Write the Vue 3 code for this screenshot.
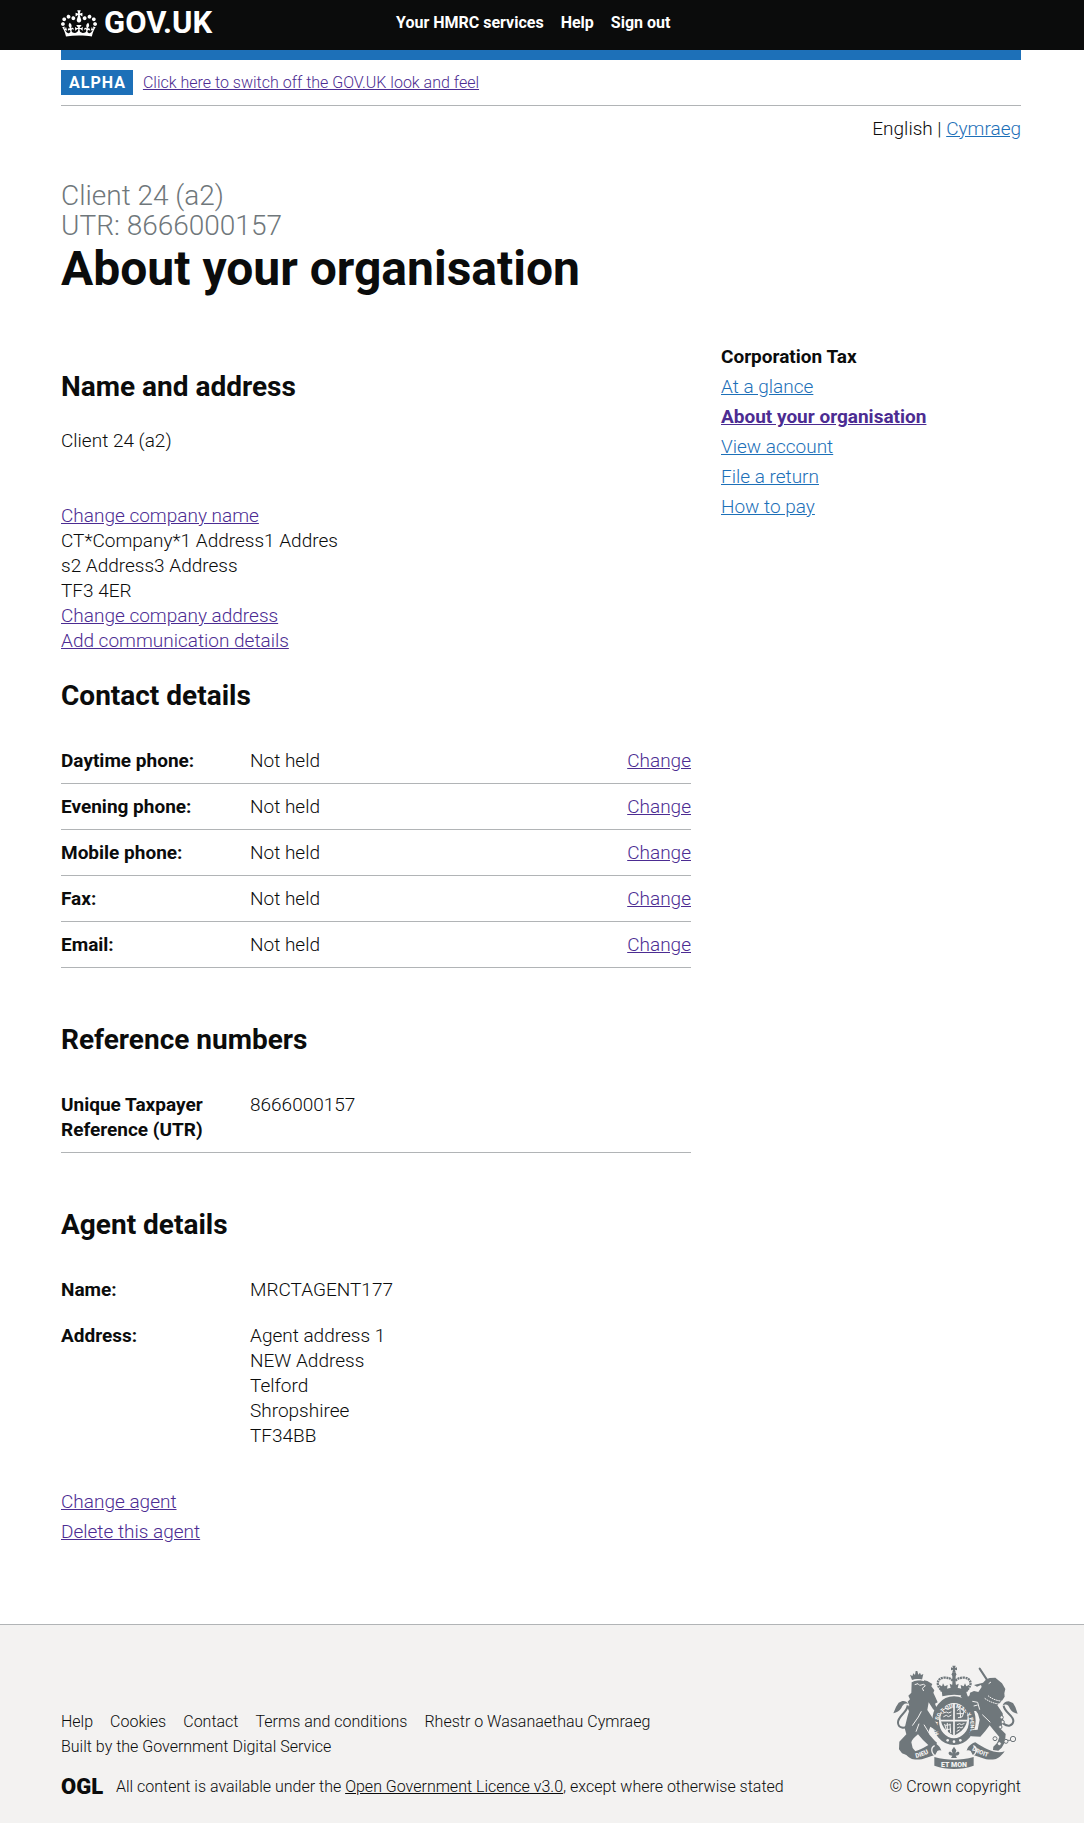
<script setup>
const headerLinks = ['Your HMRC services', 'Help', 'Sign out']

const sectionLinks = [
  { text: 'At a glance' },
  { text: 'About your organisation', current: true },
  { text: 'View account' },
  { text: 'File a return' },
  { text: 'How to pay' },
]

const contactRows = ['Daytime phone:', 'Evening phone:', 'Mobile phone:', 'Fax:', 'Email:']

const agentAddress = ['Agent address 1', 'NEW Address', 'Telford', 'Shropshiree', 'TF34BB']

const footerLinks = ['Help', 'Cookies', 'Contact', 'Terms and conditions', 'Rhestr o Wasanaethau Cymraeg']
</script>

<template>
  <div class="page">
    <header class="gutter header">
      <div class="container header-inner">
        <a href="#" class="logo">
          <svg class="crown" viewBox="0 0 132 97" aria-hidden="true">
            <path fill="currentColor" fill-rule="evenodd" d="M25 30.2c3.5 1.5 7.7-.2 9.1-3.7 1.5-3.6-.2-7.8-3.9-9.2-3.6-1.4-7.6.3-9.1 3.9-1.4 3.5.3 7.5 3.9 9zM9 39.5c3.6 1.5 7.8-.2 9.2-3.7 1.5-3.6-.2-7.8-3.9-9.1-3.6-1.5-7.6.2-9.1 3.8-1.4 3.5.3 7.5 3.8 9zM4.4 57.2c3.5 1.5 7.7-.2 9.1-3.8 1.5-3.6-.2-7.7-3.9-9.1-3.5-1.5-7.6.3-9.1 3.8-1.4 3.5.3 7.6 3.9 9.1zm38.3-21.4c3.5 1.5 7.7-.2 9.1-3.8 1.5-3.6-.2-7.7-3.9-9.1-3.6-1.5-7.6.3-9.1 3.8-1.3 3.6.4 7.7 3.9 9.1zm64.4-5.6c-3.6 1.5-7.8-.2-9.1-3.7-1.5-3.6.2-7.8 3.8-9.2 3.6-1.4 7.7.3 9.2 3.9 1.3 3.5-.4 7.5-3.9 9zm15.9 9.3c-3.6 1.5-7.7-.2-9.1-3.7-1.5-3.6.2-7.8 3.7-9.1 3.6-1.5 7.7.2 9.2 3.8 1.5 3.5-.3 7.5-3.8 9zm4.7 17.7c-3.6 1.5-7.8-.2-9.2-3.8-1.5-3.6.2-7.7 3.9-9.1 3.6-1.5 7.7.3 9.2 3.8 1.3 3.5-.4 7.6-3.9 9.1zM89.3 35.8c-3.6 1.5-7.8-.2-9.2-3.8-1.4-3.6.2-7.7 3.9-9.1 3.6-1.5 7.7.3 9.2 3.8 1.4 3.6-.3 7.7-3.9 9.1zM69.7 17.7l8.9 4.7V9.3l-8.9 2.8c-.2-.3-.5-.6-.9-.9L72.4 0H59.6l3.5 11.2c-.3.3-.6.5-.9.9l-8.8-2.8v13.1l8.8-4.7c.3.3.6.7.9.9l-5 15.4v.1c-.2.8-.4 1.6-.4 2.4 0 4.1 3.1 7.5 7 8.1h.2c.3 0 .7.1 1 .1.4 0 .7 0 1-.1h.2c4-.6 7.1-4.1 7.1-8.1 0-.8-.1-1.7-.4-2.4V34l-5.1-15.4c.4-.2.7-.6 1-.9zM66 92.8c16.9 0 32.8 1.1 47.1 3.2 4-16.9 8.9-26.7 14-33.5l-9.6-3.4c1 4.9 1.1 7.2 0 10.2-1.5-1.4-3-4.3-4.2-8.7L108.6 76c2.8-2 5-3.2 7.5-3.3-4.4 9.4-10 11.9-13.6 11.2-4.3-.8-6.3-4.6-5.6-7.9 1-4.7 5.7-5.9 8-.5 4.3-8.7-3-11.4-7.6-8.8 7.1-7.2 7.9-13.5 2.1-21.1-8 6.1-8.1 12.3-4.5 20.8-4.7-5.4-12.1-2.5-9.5 6.2 3.4-5.2 7.9-2 7.2 3.1-.6 4.3-6.4 7.8-13.5 7.2-10.3-.9-10.9-8-11.2-13.8 2.5-.5 7.1 1.8 11 7.3L80.2 60c-4.1 4.4-8 5.3-12.3 5.4 1.4-4.4 8-11.6 8-11.6H55.5s6.4 7.2 7.9 11.6c-4.2-.1-8-1-12.3-5.4l1.4 16.4c3.9-5.5 8.5-7.7 10.9-7.3-.3 5.8-.9 12.8-11.1 13.8-7.2.6-12.9-2.9-13.5-7.2-.7-5 3.8-8.3 7.1-3.1 2.7-8.7-4.6-11.6-9.4-6.2 3.7-8.5 3.6-14.7-4.6-20.8-5.8 7.6-5 13.9 2.2 21.1-4.7-2.6-11.9.1-7.7 8.8 2.3-5.5 7.1-4.2 8.1.5.7 3.3-1.3 7.1-5.7 7.9-3.5.7-9-1.8-13.5-11.2 2.5.1 4.7 1.3 7.5 3.3l-4.7-15.4c-1.2 4.4-2.7 7.2-4.3 8.7-1.1-3-.9-5.3 0-10.2l-9.5 3.4c5 6.9 9.9 16.7 14 33.5 14.8-2.1 30.8-3.2 47.7-3.2z" />
          </svg>
          <span>GOV.UK</span>
        </a>
        <nav class="header-nav" aria-label="Account">
          <a v-for="link in headerLinks" :key="link" href="#">{{ link }}</a>
        </nav>
      </div>
    </header>

    <div class="gutter">
      <div class="container">
        <div class="blue-bar"></div>
        <div class="phase-banner">
          <strong class="tag">ALPHA</strong>
          <a href="#" class="visited">Click here to switch off the GOV.UK look and feel</a>
        </div>
        <p class="languages">English | <a href="#">Cymraeg</a></p>

        <h1>
          <span class="caption">Client 24 (a2)<br>UTR: 8666000157</span>
          About your organisation
        </h1>

        <div class="columns">
          <main>
            <h2 class="first">Name and address</h2>
            <p class="client">Client 24 (a2)</p>
            <p class="details">
              <a href="#" class="visited">Change company name</a><br>
              CT*Company*1 Address1 Addres<br>
              s2 Address3 Address<br>
              TF3 4ER<br>
              <a href="#" class="visited">Change company address</a><br>
              <a href="#" class="visited">Add communication details</a>
            </p>

            <h2 class="contact">Contact details</h2>
            <table>
              <tbody>
                <tr v-for="label in contactRows" :key="label">
                  <th scope="row">{{ label }}</th>
                  <td>Not held</td>
                  <td class="action"><a href="#" class="visited">Change</a></td>
                </tr>
              </tbody>
            </table>

            <h2>Reference numbers</h2>
            <table>
              <tbody>
                <tr>
                  <th scope="row">Unique Taxpayer Reference (UTR)</th>
                  <td colspan="2">8666000157</td>
                </tr>
              </tbody>
            </table>

            <h2>Agent details</h2>
            <table class="plain">
              <tbody>
                <tr>
                  <th scope="row">Name:</th>
                  <td colspan="2">MRCTAGENT177</td>
                </tr>
                <tr>
                  <th scope="row">Address:</th>
                  <td colspan="2">
                    <div v-for="line in agentAddress" :key="line">{{ line }}</div>
                  </td>
                </tr>
              </tbody>
            </table>

            <ul class="link-list agent-links">
              <li><a href="#" class="visited">Change agent</a></li>
              <li><a href="#" class="visited">Delete this agent</a></li>
            </ul>
          </main>

          <aside>
            <h3>Corporation Tax</h3>
            <ul class="link-list">
              <li v-for="link in sectionLinks" :key="link.text">
                <a href="#" :class="{ visited: link.current, current: link.current }">{{ link.text }}</a>
              </li>
            </ul>
          </aside>
        </div>
      </div>
    </div>

    <footer class="gutter footer">
      <div class="container footer-inner">
        <div class="footer-meta">
          <ul class="footer-links">
            <li v-for="link in footerLinks" :key="link"><a href="#">{{ link }}</a></li>
          </ul>
          <div>Built by the Government Digital Service</div>
          <div class="licence">
            <span class="ogl">OGL</span>
            <span>All content is available under the <a href="#" class="underlined">Open Government Licence v3.0</a>, except where otherwise stated</span>
          </div>
        </div>
        <a href="#" class="copyright">
          <svg class="arms" viewBox="39 42 375 312" aria-hidden="true">
            <!-- garter and shield -->
            <ellipse cx="222" cy="209" rx="55" ry="63" fill="none" stroke="#6f777b" stroke-width="20" />
            <path d="M184 180c10-27 66-27 76 0 8 26-1 57-38 74-37-17-46-48-38-74z" fill="#6f777b" />
            <path d="M222 158v97M181 209h82" stroke="#f3f2f1" stroke-width="5" />
            <g stroke="#f3f2f1" stroke-width="3" fill="none" stroke-linecap="round">
              <path d="M190 176l8-4 6 3 8-4M190 186l9-3 6 3 8-3M191 197l8-4 6 4 8-4M232 221l7-3 5 3 8-3M232 231l6-3 5 3 5-3M231 241l7-4" />
              <path d="M232 178l10-7 10 10-5 16-12 3M240 176l2 24M231 188h19" />
              <path d="M194 220l6 20M202 217v29M210 219l2 26M197 223l14-2M199 236l13-2" />
            </g>
            <path id="garter-arc" d="M176 250A50 57 0 1 1 268 250" fill="none" />
            <text class="arms-text" font-size="16"><textPath href="#garter-arc" startOffset="50%" text-anchor="middle">HONI SOIT QUI MAL Y PENSE</textPath></text>
            <g fill="#f3f2f1">
              <circle cx="203" cy="268" r="4" />
              <circle cx="222" cy="272" r="4" />
              <circle cx="241" cy="268" r="4" />
            </g>

            <!-- crown -->
            <g fill="#6f777b">
              <path d="M217 44h10l-2 7 6-2v9l-6-2 2 8h-10l2-8-6 2v-9l6 2z" />
              <circle cx="222" cy="70" r="7" />
              <path d="M185 117c25-8 50-8 75 0l-2 19c-24-6-47-6-71 0z" />
              <path d="M182 122l-5-21 9 5 3-9 5 9 9-4-2 13 11-3-3-14 8 4 5-11 6 11 8-4-3 14 11 3-2-13 9 4 4-9 4 9 9-5-5 21z" />
              <path d="M217 74h10v32h-10z" />
            </g>
            <g fill="none" stroke="#6f777b" stroke-width="7" stroke-dasharray="6 2">
              <path d="M183 116c-17-16-10-36 10-36 12 0 20 2 26 10" />
              <path d="M262 116c17-16 10-36-10-36-12 0-20 2-26 10" />
            </g>

            <!-- lion -->
            <g fill="#6f777b">
              <path d="M90 71l7 4 3-8 5 5 2-12h5l3 11 5-6 3 7 7-3-4 17c-9-3-20-3-30 1z" />
              <path d="M95 94c14-8 31-9 47-4l15 9-3 7 9 12-3 7 6 13 7 16-8 4 5 13c3 5 8 8 15 7l-5 9-10-1-11-12-13-20-4 23 12 18 8 13 7 9 8 13-5 13-9-8-12-8-5 13 3 12 16 18 6 5-5 12-18-2-19-18-15-17c-11 9-19 17-20 24l4 17 10 12v11H85l-19-7-9-12 1-23 21-22-5-19 8-33 5-17-5-12 6-6-5-11 7-7-5-11 9-9z" />
              <path d="M40 187l8-19 8-13 11-5c7-1 14 1 18 9-10-4-16 0-21 12-5 10-14 13-24 16z" />
            </g>
            <path d="M83 163c-1 22-31 33-29 53 2 16 19 18 31 8" fill="none" stroke="#6f777b" stroke-width="6" />
            <path d="M104 101l10-3 5 5 12-3 5 4-9 8 4 8M124 181l-9 17-18 26M117 218l-9 24M132 221l18 30M94 91c14-6 26-6 38-2" fill="none" stroke="#f3f2f1" stroke-width="3" />

            <!-- unicorn -->
            <path d="M299 53l25 38" fill="none" stroke="#6f777b" stroke-width="6" stroke-linecap="round" />
            <g fill="#6f777b">
              <path d="M309 95l10-10 10-4 17-1 11 9 9 8 10 17-3 13 1 10-9 14-9 8-4 4 16 24 2 24-8 23 15 15-2 24-10 17-10 9-16-2 1-10 12-12 6-17-15-18-14-17-13 17-15 17-27-1-8-8 9-10 18-2 6-30-5-18-6-8-14 1-14-2-7-10-3-21-8-12 5-10 12-1 5 12 5-4 1-8 12-5 13 3 10-15-2-6-12 5-9-5z" />
              <path d="M413 188l-7-20-7-12-13-5c-9 0-15 4-18 12 12-6 17-1 22 10 4 8 12 13 23 15z" />
            </g>
            <path d="M371 164c1 20 31 29 29 47-2 14-16 17-30 7" fill="none" stroke="#6f777b" stroke-width="6" />
            <path d="M314 142c15 11 31 16 48 18M324 134c12 10 26 15 43 17" fill="none" stroke="#f3f2f1" stroke-width="3" stroke-dasharray="5 2" />
            <path d="M277 151l16 3 6 22M281 165l12-3M326 98l7-5M307 191l24 23" fill="none" stroke="#f3f2f1" stroke-width="3" />
            <g fill="#f3f2f1" stroke="#6f777b" stroke-width="3">
              <circle cx="365" cy="199" r="5" />
              <circle cx="368" cy="213" r="5" />
              <circle cx="361" cy="228" r="5" />
              <circle cx="345" cy="263" r="6" />
              <circle cx="358" cy="278" r="6" />
              <circle cx="378" cy="271" r="6" />
              <circle cx="399" cy="264" r="8" />
              <path d="M383 268h9" />
            </g>

            <!-- motto ribbon -->
            <path d="M70 301c24 10 59-7 88-27 13 4 23 13 26 25-4-2-8-2-12 1l-6 11c-20 6-40 18-66 14-11-2-22-12-30-24z" fill="#6f777b" />
            <path d="M374 301c-24 10-59-7-88-27-13 4-23 13-26 25 4-2 8-2 12 1l6 11c20 6 40 18 66 14 11-2 22-12 30-24z" fill="#6f777b" />
            <path d="M163 318c39 11 79 11 118 0v26c-38 13-79 13-118 0z" fill="#6f777b" />
            <path d="M164 284c-13 6-11 24 4 31M280 284c13 6 11 24-4 31" fill="none" stroke="#f3f2f1" stroke-width="4" />
            <text class="arms-text" font-size="21" x="222" y="347" text-anchor="middle">ET MON</text>
            <path id="ribbon-left" d="M108 321c20-4 36-13 56-23" fill="none" />
            <path id="ribbon-right" d="M275 297c18 11 38 19 72 27" fill="none" />
            <text class="arms-text" font-size="19"><textPath href="#ribbon-left">DIEU</textPath></text>
            <text class="arms-text" font-size="18"><textPath href="#ribbon-right">DROIT</textPath></text>

            <!-- fleur-de-lis -->
            <path d="M222 287l7 11-3 10c8-12 18-2 8 5l-7 1 4 7h-18l4-7-7-1c-10-7 0-17 8-5l-3-10z" fill="#6f777b" />
          </svg>
          <span>© Crown copyright</span>
        </a>
      </div>
    </footer>
  </div>
</template>

<style>
body {
  margin: 0;
  background: #fff;
}
</style>

<style scoped>
.page {
  color: #0b0c0c;
  font-family: Roboto, "Liberation Sans", sans-serif;
  font-size: 19px;
  font-weight: 350;
  line-height: 25px;
}

h1,
h2,
h3,
p,
ul {
  margin: 0;
  padding: 0;
}

ul {
  list-style: none;
}

a {
  color: #1d70b8;
}

a.visited {
  color: #4c2c92;
}

.gutter {
  padding: 0 32px 0 30px;
}

.container {
  max-width: 960px;
  margin: 0 auto;
}

.header {
  background: #0b0c0c;
}

.header-inner {
  display: flex;
  align-items: center;
  height: 50px;
}

.header a {
  color: #fff;
  font-weight: 700;
  text-decoration: none;
}

.logo {
  display: flex;
  align-items: center;
  gap: 7px;
  width: 335px;
  padding-bottom: 4px;
  box-sizing: border-box;
  font-size: 31px;
  line-height: 30px;
}

.crown {
  width: 36px;
  height: 27px;
}

.header-nav {
  display: flex;
  gap: 17px;
  padding-bottom: 5px;
  font-size: 16px;
}

.blue-bar {
  height: 10px;
  background: #1d70b8;
}

.phase-banner {
  display: flex;
  align-items: center;
  gap: 10px;
  padding: 10px 0;
  border-bottom: 1px solid #b1b4b6;
  font-size: 16px;
}

.tag {
  padding: 0 7px 0 8px;
  background: #1d70b8;
  color: #fff;
  font-weight: 700;
  letter-spacing: 1px;
}

.languages {
  padding-top: 10px;
  text-align: right;
}

h1 {
  margin-top: 40px;
  font-size: 48px;
  line-height: 50px;
}

.caption {
  display: block;
  margin-bottom: 3px;
  color: #6f777b;
  font-size: 28px;
  font-weight: 350;
  line-height: 30px;
}

.columns {
  display: grid;
  grid-template-columns: 21fr 10fr;
  gap: 30px;
  padding: 50px 0 80px;
}

h2 {
  margin: 56px 0 26px;
  font-size: 28px;
  line-height: 32px;
}

h2.first {
  margin: 27px 0 25px;
}

h2.contact {
  margin-top: 27px;
}

.client {
  margin-bottom: 50px;
}

table {
  width: 100%;
  border-collapse: collapse;
  table-layout: fixed;
}

th,
td {
  padding: 10px 0;
  border-bottom: 1px solid #b1b4b6;
  text-align: left;
  vertical-align: top;
}

th {
  width: 30%;
  padding-right: 20px;
  box-sizing: border-box;
}

.action {
  text-align: right;
}

.plain th,
.plain td {
  border-color: transparent;
}

.link-list {
  display: grid;
  gap: 5px;
}

.agent-links {
  margin-top: 30px;
}

h3 {
  margin-bottom: 5px;
  font-size: 19px;
}

.current {
  font-weight: 700;
}

.footer {
  border-top: 1px solid #b1b4b6;
  background: #f3f2f1;
  font-size: 16px;
}

.footer a {
  color: #0b0c0c;
  text-decoration: none;
}

.footer a.underlined {
  text-decoration: underline;
}

.footer-inner {
  display: flex;
  align-items: flex-end;
  justify-content: space-between;
  padding: 40px 0 24px;
}

.footer-links {
  display: flex;
  gap: 17px;
}

.licence {
  display: flex;
  gap: 14px;
  margin-top: 15px;
}

.ogl {
  width: 41px;
  font-size: 22px;
  font-weight: 900;
}

.copyright {
  text-align: right;
}

.arms {
  display: block;
  width: 125px;
  height: 104px;
  margin: 0 3px 5px auto;
}

.arms-text {
  fill: #f3f2f1;
  font-weight: 900;
}
</style>
